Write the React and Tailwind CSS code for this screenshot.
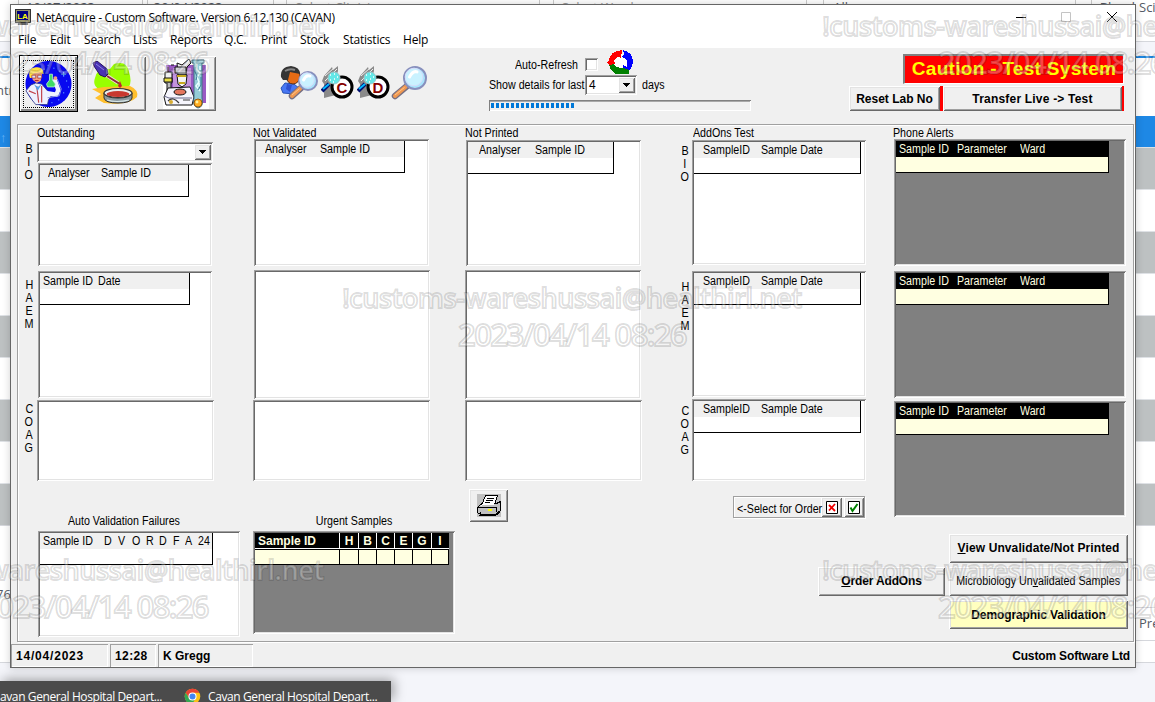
import React from "react";

const SUNKEN =
  "p-0.5 shadow-[inset_1px_1px_#a0a0a0,inset_-1px_-1px_#fff,inset_2px_2px_#696969,inset_-2px_-2px_#e3e3e3]";
const RAISED =
  "shadow-[inset_1px_1px_#fff,inset_-1px_-1px_#696969,inset_2px_2px_#e3e3e3,inset_-2px_-2px_#a0a0a0]";

function T({ children, center = false, className = "" }) {
  return (
    <span className={`inline-block shrink-0 scale-x-[0.89] whitespace-pre leading-[13px] ${center ? "origin-center" : "origin-left"} ${className}`}>
      {children}
    </span>
  );
}

function Panel({ className = "", children }) {
  return <div className={`shrink-0 ${SUNKEN} ${className}`}>{children}</div>;
}

function Head({ className = "", dark = false, cells }) {
  return (
    <div className={`h-8 border-r border-b border-black ${dark ? "bg-[#ffffe1]" : "bg-white"} ${className}`}>
      <div className={`flex h-4 items-center ${dark ? "bg-black text-[#ffffe1]" : "bg-[#f0f0f0]"}`}>
        {cells.map(([text, w], i) => (
          <T key={i} className={w}>{text}</T>
        ))}
      </div>
    </div>
  );
}

function Letters({ text, className = "" }) {
  return (
    <div className={`flex w-[10px] flex-col items-center ${className}`}>
      {text.split("").map((c, i) => (
        <span key={i} className="block h-[13px] scale-x-[0.9] leading-[13px]">{c}</span>
      ))}
    </div>
  );
}

function Btn({ className = "", children }) {
  return (
    <button className={`flex shrink-0 items-center justify-center whitespace-nowrap bg-[#f0f0f0] ${RAISED} ${className}`}>
      {children}
    </button>
  );
}

function Drop({ className = "" }) {
  return (
    <div className={`flex shrink-0 items-center justify-center bg-[#f0f0f0] ${RAISED} ${className}`}>
      <svg width="7" height="4" viewBox="0 0 7 4" shapeRendering="crispEdges"><path d="M0 0H7V1H6V2H5V3H4V4H3V3H2V2H1V1H0Z" /></svg>
    </div>
  );
}

function Scientist() {
  return (
    <svg width="50" height="48" viewBox="0 0 50 48">
      <circle cx="25" cy="24" r="23.5" fill="#0808f0" />
      <path d="M30 8h1M36 11h1M43 21h1M40 33h1M28 43h1M35 40h1M45 27h1M24 5h1M20 9h1" stroke="#5a8fff" strokeWidth="1.5" />
      <path d="M38 14h5M40.500 11.500v5" stroke="#6fc0ff" />
      <path d="M2 31 7 25 12 23 18 24 24 31 28 36 25 40 24 45 12 45 8 40Z" fill="#eef1ff" stroke="#2a2f80" strokeWidth=".8" />
      <path d="M22 33 33 35 35 30 31 19" stroke="#eef1ff" strokeWidth="4.500" fill="none" strokeLinejoin="round" />
      <path d="M24 38 36 36 38 29 34 19" stroke="#8a94e0" strokeWidth="1" fill="none" />
      <path d="M5 31 12 34M13 26 15 43M18 26 18 43" stroke="#c04048" strokeWidth="1.2" />
      <path d="M10 24 14 27 18 24 14 31Z" fill="#54a0e8" />
      <path d="M7 13Q8 8 14 8 20 9 18 16L17 21 13 23 9 20Z" fill="#f4a080" />
      <path d="M6 18Q3 8 12 7 20 6 20 14L16 12 10 13 8 18Z" fill="#ffe045" />
      <path d="M8 15h4v3H8zM14 15h4v3h-4z" fill="#d6e8ff" stroke="#a83a3a" strokeWidth=".8" />
      <path d="M11 20.500h4" stroke="#a41d2b" />
      <path d="M26 14h3v6l3 4-1 3h-7l-1-3 3-4Z" fill="#40dc65" stroke="#bff5d5" strokeWidth=".8" />
      <circle cx="32" cy="18" r="2" fill="#f4a080" />
    </svg>
  );
}

function Pipette() {
  return (
    <svg width="48" height="46" viewBox="0 0 48 46">
      <path d="M3 17Q5 6 18 8L22 3Q35-1 37 11 42 26 31 31L8 29Q0 25 3 17Z" fill="#99ff00" />
      <path d="M0 28 12 26 38 25Q47 29 45 36 36 45 12 42L3 37 9 33Z" fill="#ffc02e" />
      <path d="M14 14 26 22" stroke="#f0dcd8" strokeWidth="3.500" />
      <path d="M15 15 27 22.500" stroke="#8b2d36" strokeWidth="2" />
      <path d="M1 2 5 0 15 8 16 13 13 16 8 14 2 5Z" fill="#4932b4" stroke="#26105f" />
      <path d="M4 3 12 9" stroke="#8f83e0" />
      <path d="M28 20 30 25 28 27 26 25Z" fill="#c2272f" />
      <path d="M12 32v5Q13 42 26 42 39 42 40 37V32Q38 37 26 37 14 37 12 32" fill="#8c9aa0" stroke="#303030" />
      <ellipse cx="26" cy="32" rx="14" ry="4.500" fill="#e8f0f0" stroke="#333" strokeWidth="1.2" />
      <ellipse cx="26" cy="33" rx="11.500" ry="3" fill="#c8382f" />
      <path d="M15 39Q24 42 37 39" stroke="#d8e8e8" fill="none" strokeWidth="1.2" />
    </svg>
  );
}

function Microscope() {
  return (
    <svg width="46" height="50" viewBox="0 0 46 50">
      <path d="M0 0H46V50H0Z" fill="#fff" />
      <path d="M3 6H43V44H7Z" fill="#9a5ac4" /><path d="M10 9h18v25H10z" fill="#c493dd" />
      <path d="M14 4 19 6 26 0 28 4 24 8 23 16 15 16Z" fill="#eee" stroke="#111" />
      <path d="M12 8h11v6H12z" fill="#d5d6dc" stroke="#111" />
      <path d="M14 16h10l-1 9-4 3-4-3Z" fill="#f4f4f4" stroke="#111" />
      <path d="M14 17h9M16 24h6" stroke="#c7a91e" strokeWidth="2" />
      <path d="M2 13h7v11H2z" fill="#f0f0f0" stroke="#111" /><path d="M1 19h8v4H1z" fill="#e8dd43" stroke="#111" />
      <path d="M4 24v8h4v-8M5 8v5M8 6h3" fill="#bbb" stroke="#111" />
      <path d="M5 29 27 28 31 38 29 46H3L1 38Z" fill="#f6f6fd" stroke="#111" />
      <path d="M1 37 6 39H29" fill="none" stroke="#68688a" /><ellipse cx="17" cy="33" rx="6" ry="3" fill="#e4765e" stroke="#111" />
      <path d="M5 42Q10 37 16 44M20 41h7" stroke="#3a3a3a" fill="none" strokeWidth="1.2" />
      <circle cx="8" cy="43" r="2" fill="#d7ad32" />
      <path d="M29 1H41V4H39V39Q41 48 35 49 29 47 31 39V4H29Z" fill="#94ccd7" stroke="#3e6d80" />
      <path d="M34 5v5l3 4-3 4 2 5-3 4 4 5M37 7v4M36 24v4" stroke="#e9ffff" fill="none" strokeWidth="1.5" />
      <path d="M32 8v5l2 4-1 4M38 18v8l-3 5" stroke="#397b98" fill="none" />
      <circle cx="35" cy="44" r="4" fill="#ffad22" stroke="#965b11" /><circle cx="34" cy="43" r="1.4" fill="#fff3a0" />
    </svg>
  );
}

function Lens({ cx, cy, r, hx, hy }) {
  return (
    <g>
      <path d={`M${cx - r * 0.75} ${cy + r * 0.75}L${hx} ${hy}`} stroke="#777083" strokeWidth="6.5" strokeLinecap="round" />
      <path d={`M${cx - r * 0.85} ${cy + r * 0.8}L${hx} ${hy}`} stroke="#f09850" strokeWidth="4" strokeLinecap="round" />
      <path d={`M${cx - r * 0.95} ${cy + r * 0.85}L${hx} ${hy - 1}`} stroke="#ffc58b" strokeWidth="1" />
      <circle cx={cx} cy={cy} r={r} fill="#a9e4fc" stroke="#8890bd" strokeWidth="2" />
      <circle cx={cx - 1} cy={cy - 1} r={r * 0.8} fill="#c9f2ff" stroke="#d7ddfa" strokeWidth="1" />
      <path d={`M${cx - r * 0.5} ${cy - 1}Q${cx - 2} ${cy - r * 0.7} ${cx + 2} ${cy - r * 0.55}`} stroke="#fff" strokeWidth="3" fill="none" strokeLinecap="round" />
    </g>
  );
}

function PersonSearch() {
  return (
    <svg width="39" height="35" viewBox="0 0 39 35">
      <path d="M1 22 5 17 14 18 20 23 14 28 3 27Z" fill="#4877f3" stroke="#2852b6" />
      <path d="M7 18 12 19 10 26 6 23" fill="#2e50d0" />
      <ellipse cx="13" cy="10" rx="7" ry="8" fill="#e66b14" stroke="#58301d" />
      <path d="M1 11Q0 1 11 0 20 1 20 8L10 6 8 14 3 14Z" fill="#343434" />
      <path d="M5 5Q10 2 15 4" stroke="#878787" strokeWidth="2" fill="none" />
      <Lens cx={28} cy={15} r={9} hx={12} hy={30} />
    </svg>
  );
}

function LetterSearch({ letter }) {
  return (
    <svg width="33" height="33" viewBox="0 0 33 33">
      <path d="M3 10 11 1 12 4 17 0 17 5 15 11V29L3 32V18L1 15Z" fill="#8a8a8a" />
      <path d="M4 10 13 2M7 12 16 3M4 15 9 10" stroke="#f0f0f0" />
      <circle cx="21" cy="21" r="10" fill="#fff" stroke="#000" strokeWidth="3" />
      <text x="21" y="26.5" textAnchor="middle" fill="#850000" fontFamily="Liberation Sans, sans-serif" fontSize="15" fontWeight="bold">{letter}</text>
      <path d="M1 25 8 18" stroke="#001070" strokeWidth="4" /><path d="M2 23 8 18" stroke="#00b9ff" strokeWidth="2" />
      <circle cx="13" cy="12" r="6" fill="#63e7e7" stroke="#9ec6cb" />
      <path d="M9 9h1M13 8h1M16 11h1M9 14h1M13 13h1M12 16h1" stroke="#fff" strokeWidth="1.5" />
    </svg>
  );
}

function RefreshRing() {
  return (
    <svg width="28" height="25" viewBox="0 0 28 25" shapeRendering="crispEdges">
      <circle cx="14" cy="12" r="8" fill="#fff" />
      <path d="M17 0Q27 2 27 13 26 18 23 21L18 20 17 15 21 17Q23 9 16 7L18 4Z" fill="#00f" />
      <path d="M2 12Q4 1 16 0L15 9Q12 5 9 9L8 12 10 13 5 16 0 12Z" fill="#f00" />
      <path d="M3 15 8 14Q10 18 17 18L23 20V24H10Q5 22 3 15Z" fill="#008000" />
    </svg>
  );
}

function PrinterArt() {
  return (
    <svg width="24" height="23" viewBox="0 0 24 23" shapeRendering="crispEdges">
      <path d="M0 0H24V23H0Z" fill="#c0c0c0" />
      <path d="M.5 13.500 4.500 9.500H19.500L23.500 7.500V16.500L20.500 20.500H3.500L.5 18.500Z" fill="#c0c0c0" stroke="#000" />
      <path d="M4.500 11.500 8.500 1.500H20.500L17.500 10.500" fill="#fff" stroke="#000" />
      <path d="M10 4.500h7M9 6.500h7M8 8.500h5" stroke="#000" />
      <path d="M1 13.500H19.500V18M4 18.500 3 21.500H18L22.500 17" stroke="#000" fill="none" />
      <path d="M11 15h4v2h-4z" fill="#ff0" />
    </svg>
  );
}

function Chrome() {
  return (
    <svg width="17" height="17" viewBox="0 0 24 24">
      <circle cx="12" cy="12" r="11" fill="#fbc116" />
      <path d="M12 1A11 11 0 0 1 21.6 6.6H12L7.3 14.8 2.4 6.6A11 11 0 0 1 12 1" fill="#ea4335" />
      <path d="M2.4 6.6 7.3 14.7 12 17.4 15.5 16 11.5 23A11 11 0 0 1 2.4 6.6" fill="#34a853" />
      <circle cx="12" cy="12" r="5" fill="#4285f4" stroke="#fff" strokeWidth="1.5" />
    </svg>
  );
}

function Watermark({ className }) {
  return (
    <div
      className={`pointer-events-none absolute z-20 flex w-[466px] flex-col items-center whitespace-nowrap font-['Open_Sans',sans-serif] font-semibold leading-9 text-white/30 [-webkit-text-stroke:1.8px_rgba(0,0,0,0.14)] ${className}`}
    >
      <span className="text-[27px] tracking-[-0.4px]">!customs-wareshussai@healthirl.net</span>
      <span className="text-[31px] tracking-[-1.6px]">2023/04/14 08:26</span>
    </div>
  );
}

function Strip({ className = "", top, mid, bottom }) {
  const rows = [0, 1, 2, 3, 4, 5, 6, 7, 8];
  return (
    <div className={`flex h-[702px] flex-col overflow-hidden whitespace-nowrap bg-[#f4f5fa] text-[13px] text-[#555b66] ${className}`}>
      <div className="h-[42px] shrink-0 border-b border-[#d5d7dc] bg-white">{top}</div>
      <div className="h-[14px] shrink-0" />
      <div className="flex h-[60px] shrink-0 items-center border-t-2 border-[#1e88e5] bg-white pt-2">{mid}</div>
      <div className="h-[31px] shrink-0 bg-[#1e88e5] pt-3 text-[#64b5f6]">{mid ? "↑" : ""}</div>
      {rows.map((r) => (
        <div key={r} className={`h-[42px] shrink-0 border-t border-[#dfe2e6] ${r % 2 ? "bg-white" : "bg-[#bdc1c2]"}`} />
      ))}
      <div className="flex h-[138px] shrink-0 flex-col border-y border-[#d5d7dc] bg-white">{bottom}</div>
    </div>
  );
}

const MENU = [
  ["File", "w-8"], ["Edit", "w-[34px]"], ["Search", "w-[49px]"], ["Lists", "w-[37px]"], ["Reports", "w-[54px]"],
  ["Q.C.", "w-[37px]"], ["Print", "w-[39px]"], ["Stock", "w-[43px]"], ["Statistics", "w-[60px]"], ["Help", "w-8"],
];

const PHONE = [["Sample ID", "ml-[3px] w-[58px]"], ["Parameter", "w-[63px]"], ["Ward", ""]];
const ADDON = [["SampleID", "ml-[9px] w-[58px]"], ["Sample Date", ""]];
const URGENT = [
  ["Sample ID", "w-[85px] pl-[3px] justify-start"], ["H", "w-[19px] justify-center"], ["B", "w-[18px] justify-center"],
  ["C", "w-[18px] justify-center"], ["E", "w-[18px] justify-center"], ["G", "w-[19px] justify-center"], ["I", "w-[17px] justify-center"],
];

function Toolbar() {
  return (
    <div className="flex h-[76px] shrink-0 items-start">
      <button className="ml-2 mt-[7px] flex h-[57px] w-[59px] shrink-0 items-center justify-center border border-black bg-[#f0f0f0] p-0.5 shadow-[inset_1px_1px_#fff,inset_-2px_-2px_#888]">
        <span className="flex h-[48px] w-[51px] items-center justify-center overflow-hidden border border-dotted border-black"><Scientist /></span>
      </button>
      <Btn className="ml-2 mt-2 h-[55px] w-[60px]"><Pipette /></Btn>
      <Btn className="ml-[10px] mt-2 h-[55px] w-[60px]"><Microscope /></Btn>
      <div className="ml-[64px] mt-[18px] flex shrink-0 items-start">
        <PersonSearch />
        <span className="ml-[2px]"><LetterSearch letter="C" /></span>
        <span className="ml-[3px]"><LetterSearch letter="D" /></span>
        <svg className="ml-px" width="38" height="34" viewBox="0 0 38 34"><Lens cx={24} cy={12} r={11} hx={4} hy={30} /></svg>
      </div>
      <div className="ml-[60px] flex w-[264px] shrink-0 flex-col">
        <div className="mt-0.5 flex h-[25px] items-start">
          <T className="ml-[26px] mt-[9px] w-[70px]">Auto-Refresh</T>
          <span className={`mt-2 block h-[13px] w-[13px] bg-white ${SUNKEN}`} />
          <span className="ml-2"><RefreshRing /></span>
        </div>
        <div className="flex h-[20px] items-center">
          <T className="w-24">Show details for last</T>
          <div className={`flex h-[20px] w-[52px] items-center justify-between bg-white ${SUNKEN}`}>
            <span className="pl-0.5 leading-none">4</span>
            <Drop className="h-4 w-[17px]" />
          </div>
          <T className="ml-[5px]">days</T>
        </div>
        <div className="mt-[5px] flex h-[11px] w-[262px] items-center gap-0.5 pl-[2px] shadow-[inset_1px_1px_#808080,inset_-1px_-1px_#fff,inset_0_2px_#a8a8a8]">
          {Array.from({ length: 17 }, (_, i) => <i key={i} className="block h-[5px] w-[3px] bg-[#0078d7]" />)}
        </div>
      </div>
      <div className="ml-[95px] mt-[6px] flex w-[276px] shrink-0 flex-col items-end">
        <div className="flex h-[30px] w-[221px] items-center justify-center border-l-2 border-t-2 border-r border-b border-[#808080] border-b-white border-r-white bg-[#ff0000] text-[19px] font-bold text-[#ffff00]">
          <span className="whitespace-nowrap tracking-[0.3px]">Caution - Test System</span>
        </div>
        <div className="mt-[2px] flex h-[25px] font-bold">
          <Btn className="w-[91px]">Reset Lab No</Btn>
          <i className="w-[3px] bg-[#ff0000]" />
          <Btn className="w-[179px] tracking-[0.2px]">Transfer Live -&gt; Test</Btn>
          <i className="w-[2px] bg-[#ff0000]" />
        </div>
      </div>
    </div>
  );
}

function Board() {
  return (
    <div className="ml-[6px] flex h-[518px] w-[1117px] shrink-0 items-start border border-[#a0a0a0] p-px shadow-[inset_1px_1px_#fff,1px_1px_#fff]">
      <div className="ml-[5px] mt-[17px] w-[13px] shrink-0">
        <Letters text="BIO" />
        <Letters text="HAEM" className="mt-[97px]" />
        <Letters text="COAG" className="mt-[72px]" />
      </div>

      <div className="flex w-[216px] shrink-0 flex-col items-start">
        <T className="h-[13px] pt-px">Outstanding</T>
        <div className={`mt-[3px] flex h-[20px] w-[176px] justify-end bg-white ${SUNKEN}`}><Drop className="h-4 w-[17px]" /></div>
        <Panel className="ml-px mt-px h-[103px] w-[174px] bg-white">
          <Head className="w-[149px]" cells={[["Analyser", "ml-2 w-[53px]"], ["Sample ID", ""]]} />
        </Panel>
        <Panel className="ml-px mt-[5px] h-[127px] w-[174px] bg-white">
          <Head className="w-[150px]" cells={[["Sample ID", "ml-[3px] w-[55px]"], ["Date", ""]]} />
        </Panel>
        <Panel className="mt-[2px] h-[81px] w-[177px] bg-white" />
        <div className="mt-[33px] flex h-[14px] w-[174px] items-center justify-center"><T center>Auto Validation Failures</T></div>
        <Panel className="ml-px mt-[3px] h-[106px] w-[202px] bg-white">
          <Head
            className="w-[173px]"
            cells={[["Sample ID", "ml-[3px] w-[61px]"], ["D", "w-[14px]"], ["V", "w-[14px]"], ["O", "w-[14px]"], ["R", "w-[13px]"], ["D", "w-[14px]"], ["F", "w-3"], ["A", "w-[13px]"], ["24", ""]]}
          />
        </Panel>
      </div>

      <div className="flex w-[212px] shrink-0 flex-col items-start">
        <T className="h-[13px] pt-px">Not Validated</T>
        <Panel className="ml-px h-[127px] w-[175px] bg-white">
          <Head className="w-[149px]" cells={[["Analyser", "ml-[9px] w-[55px]"], ["Sample ID", ""]]} />
        </Panel>
        <Panel className="ml-px mt-1 h-[129px] w-[176px] bg-white" />
        <Panel className="mt-px h-[81px] w-[177px] bg-white" />
        <div className="mt-[33px] flex h-[14px] w-[203px] items-center justify-center"><T center>Urgent Samples</T></div>
        <Panel className="mt-[3px] h-[103px] w-[202px] bg-[#808080]">
          <div className="w-[194px] bg-black font-bold text-[#ffffe1]">
            <div className="flex h-4 border-b border-white">
              {URGENT.map(([c, w]) => (
                <span key={c} className={`flex items-center border-r border-white leading-none last:border-black ${w}`}>{c}</span>
              ))}
            </div>
            <div className="flex h-4 border-y border-black bg-[#ffffe1]">
              {URGENT.map(([c, w]) => <span key={c} className={`border-r border-black ${w}`} />)}
            </div>
          </div>
        </Panel>
      </div>

      <div className="flex w-[215px] shrink-0 flex-col items-start">
        <T className="h-[13px] pt-px">Not Printed</T>
        <Panel className="ml-px mt-px h-[126px] w-[175px] bg-white">
          <Head className="w-[146px]" cells={[["Analyser", "ml-[11px] w-14"], ["Sample ID", ""]]} />
        </Panel>
        <Panel className="mt-1 h-[129px] w-[176px] bg-white" />
        <Panel className="mt-px h-[81px] w-[177px] bg-white" />
        <Btn className="ml-1 mt-2 h-[33px] w-[39px]"><PrinterArt /></Btn>
      </div>

      <div className="mt-[19px] w-3 shrink-0">
        <Letters text="BIO" />
        <Letters text="HAEM" className="mt-[97px]" />
        <Letters text="COAG" className="mt-[72px]" />
      </div>

      <div className="flex w-[201px] shrink-0 flex-col items-start">
        <T className="ml-px h-[13px] pt-px">AddOns Test</T>
        <Panel className="mt-px h-[125px] w-[174px] bg-white"><Head className="w-[167px]" cells={ADDON} /></Panel>
        <Panel className="mt-[6px] h-[126px] w-[174px] bg-white"><Head className="w-[167px]" cells={ADDON} /></Panel>
        <Panel className="mt-[2px] h-[82px] w-[174px] bg-white"><Head className="w-[167px]" cells={ADDON} /></Panel>
        <div className="ml-[41px] mt-[15px] flex h-[22px] w-[132px] items-center border border-[#a0a0a0] shadow-[inset_1px_1px_#fff,1px_1px_#fff]">
          <T className="ml-[3px] mt-1 w-[84px]">&lt;-Select for Order</T>
          <Btn className="h-5 w-[21px]">
            <svg width="12" height="13" viewBox="0 0 12 13"><path d="M.5.5h11v12H.5z" fill="#fff" stroke="#000" /><path d="M3 4 9 10M9 3 3 9.500" stroke="#f00000" strokeWidth="1.8" /></svg>
          </Btn>
          <Btn className="ml-0.5 h-5 w-[20px]">
            <svg width="12" height="13" viewBox="0 0 12 13"><path d="M.5.5h11v12H.5z" fill="#fff" stroke="#000" /><path d="M2.500 6.500 4.500 10 9.500 3" fill="none" stroke="#008000" strokeWidth="2" /></svg>
          </Btn>
        </div>
        <Btn className="ml-[126px] mt-[49px] h-[29px] w-[127px] pb-px font-bold tracking-[-0.15px]"><u>O</u>rder AddOns</Btn>
      </div>

      <div className="flex shrink-0 flex-col items-start">
        <T className="h-[13px] pt-px">Phone Alerts</T>
        <Panel className="ml-px h-[127px] w-[232px] bg-[#808080]"><Head dark className="w-[213px]" cells={PHONE} /></Panel>
        <Panel className="ml-px mt-[5px] h-[127px] w-[232px] bg-[#808080]"><Head dark className="w-[213px]" cells={PHONE} /></Panel>
        <Panel className="ml-px mt-[3px] h-[116px] w-[232px] bg-[#808080]"><Head dark className="w-[213px]" cells={PHONE} /></Panel>
        <Btn className="ml-14 mt-[17px] h-[29px] w-[179px] pb-0.5 font-bold tracking-[0.1px]"><u>V</u>iew Unvalidate/Not Printed</Btn>
        <Btn className="ml-14 mt-1 h-[29px] w-[179px]">
          <T center>Microbiology Un<u>v</u>alidated Samples</T>
        </Btn>
        <Btn className="ml-14 mt-1 h-[29px] w-[179px] bg-[#ffffc0]! font-bold tracking-[-0.1px]">Demographic Validation</Btn>
      </div>
    </div>
  );
}

function StatusBar() {
  const cell = "flex h-[23px] shrink-0 items-center pl-[5px] pt-px shadow-[inset_1px_1px_#a0a0a0,inset_-1px_-1px_#fff]";
  return (
    <div className="mt-0.5 flex flex-1 items-start pr-[5px] font-bold">
      <div className={`${cell} w-[97px] tracking-[0.8px]`}>14/04/2023</div>
      <div className={`${cell} ml-0.5 w-[46px] tracking-[0.4px]`}>12:28</div>
      <div className={`${cell} ml-[2px] w-[95px]`}>K Gregg</div>
      <span className="ml-auto pt-px leading-[23px] tracking-[-0.15px]">Custom Software Ltd</span>
    </div>
  );
}

export default function App() {
  return (
    <div className="relative h-[702px] w-[1155px] overflow-hidden bg-[#f4f5fa] font-['Open_Sans',sans-serif] antialiased">
      <div className="flex justify-between">
        <Strip className="w-[10px]" top="" mid={<span className="-ml-1">ntr</span>} bottom={<span className="mt-[59px] -ml-1">76</span>} />
        <div className="flex h-[14px] flex-1 items-start overflow-hidden whitespace-nowrap bg-white text-[13px] leading-[15px] text-[#555b66]">
          <span className="ml-[8px] w-[125px] border-x border-[#ccc] pl-[7px]">10/07/2023 &nbsp; &nbsp; &nbsp;▬</span>
          <span className="ml-1 w-[128px] border-x border-[#ccc] pl-[6px]">30/04/2023 &nbsp; &nbsp; &nbsp;▬</span>
          <span className="ml-3 w-[254px] border-x border-[#ccc] pl-[8px] text-[#9a9a9a]">Select Clinician</span>
          <span className="ml-[13px] w-[255px] border-x border-[#ccc] pl-[8px] text-[#9a9a9a]">Select Ward</span>
          <span className="ml-4 w-[253px] border-x border-[#ccc] pl-[9px]">All</span>
          <span className="ml-[15px] border-l border-[#ccc] pl-2">Blood</span>
        </div>
        <Strip className="w-5" top={<span className="block pl-1 leading-[15px]">Sciences</span>} bottom={<><span className="h-[82px] border-b border-[#d5d7dc]" /><span className="flex h-[33px] items-center border-b border-[#d5d7dc] pl-1">Pre</span></>} />
      </div>

      <main className="absolute left-[10px] top-1 z-10 flex h-[664px] w-[1126px] flex-col border border-[#666] bg-[#f0f0f0] font-['Liberation_Sans',Arial,sans-serif] text-[12px] text-black shadow-[0_0_8px_rgba(0,0,0,0.18)]">
        <header className="flex h-[43px] shrink-0 flex-col bg-white font-['Open_Sans',sans-serif] text-[12px]">
          <div className="flex h-6 items-center pl-1">
            <svg width="16" height="16" viewBox="0 0 16 16" shapeRendering="crispEdges">
              <path d="M0 0h15v13H0z" fill="#9b9870" stroke="#333" /><path d="M2 2h11v9H2z" fill="#000080" />
              <path d="M3 14h10v2H3z" fill="#666" />
              <text x="7.500" y="9.500" textAnchor="middle" fontFamily="Liberation Sans, sans-serif" fontSize="8" fontWeight="bold" fill="#ff0">LA</text>
            </svg>
            <span className="ml-[5px] whitespace-nowrap pt-0.5 tracking-[-0.34px]">NetAcquire - Custom Software. Version 6.12.130 (CAVAN)</span>
            <svg className="ml-auto mr-[17px]" width="102" height="12" viewBox="0 0 102 12" fill="none">
              <path d="M0 6.500h10" stroke="#000" /><path d="M45.500 1.500h9v9h-9z" stroke="#c4c4c4" /><path d="M91 1 101 11M101 1 91 11" stroke="#000" />
            </svg>
          </div>
          <nav className="flex h-[19px] items-center pl-[7px] pt-[3px] tracking-[-0.2px]">
            {MENU.map(([m, w]) => <span key={m} className={`shrink-0 ${w}`}>{m}</span>)}
          </nav>
        </header>
        <Toolbar />
        <Board />
        <StatusBar />
      </main>

      <footer className="absolute bottom-0 left-0 flex h-[21px] w-[391px] items-center whitespace-nowrap bg-[#4b4b4b] pt-[10px] text-[12px] tracking-[-0.4px] text-white shadow-[3px_-2px_12px_rgba(0,0,0,0.35)]">
        <span className="w-[184px]">avan General Hospital Depart...</span>
        <Chrome />
        <span className="ml-[7px]">Cavan General Hospital Depart...</span>
      </footer>

      <Watermark className="left-[-139px] top-[8px]" />
      <Watermark className="left-[819px] top-[8px]" />
      <Watermark className="left-[339px] top-[280px]" />
      <Watermark className="left-[-139px] top-[552px]" />
      <Watermark className="left-[819px] top-[552px]" />
    </div>
  );
}
